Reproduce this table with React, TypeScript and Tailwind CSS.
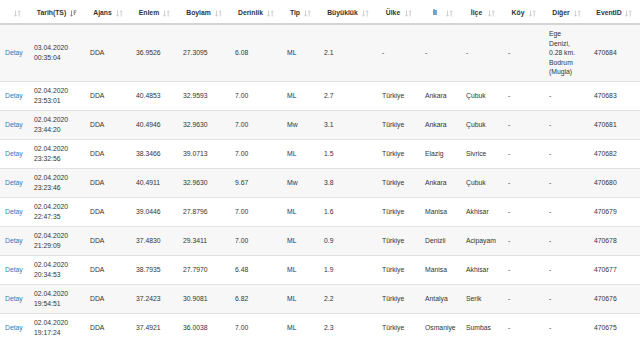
import React from "react";

type Row = {
  date: string;
  time: string;
  lat: string;
  lon: string;
  depth: string;
  type: string;
  mag: string;
  country: string;
  city: string;
  district: string;
  village: string;
  other: string;
  id: string;
};

const rows: Row[] = [
  { date: "03.04.2020", time: "00:35:04", lat: "36.9526", lon: "27.3095", depth: "6.08", type: "ML", mag: "2.1", country: "-", city: "-", district: "-", village: "-", other: "Ege Denizi, 0.28 km. Bodrum (Mugla)", id: "470684" },
  { date: "02.04.2020", time: "23:53:01", lat: "40.4853", lon: "32.9593", depth: "7.00", type: "ML", mag: "2.7", country: "Türkiye", city: "Ankara", district: "Çubuk", village: "-", other: "-", id: "470683" },
  { date: "02.04.2020", time: "23:44:20", lat: "40.4946", lon: "32.9630", depth: "7.00", type: "Mw", mag: "3.1", country: "Türkiye", city: "Ankara", district: "Çubuk", village: "-", other: "-", id: "470681" },
  { date: "02.04.2020", time: "23:32:56", lat: "38.3466", lon: "39.0713", depth: "7.00", type: "ML", mag: "1.5", country: "Türkiye", city: "Elazig", district: "Sivrice", village: "-", other: "-", id: "470682" },
  { date: "02.04.2020", time: "23:23:46", lat: "40.4911", lon: "32.9630", depth: "9.67", type: "Mw", mag: "3.8", country: "Türkiye", city: "Ankara", district: "Çubuk", village: "-", other: "-", id: "470680" },
  { date: "02.04.2020", time: "22:47:35", lat: "39.0446", lon: "27.8796", depth: "7.00", type: "ML", mag: "1.6", country: "Türkiye", city: "Manisa", district: "Akhisar", village: "-", other: "-", id: "470679" },
  { date: "02.04.2020", time: "21:29:09", lat: "37.4830", lon: "29.3411", depth: "7.00", type: "ML", mag: "0.9", country: "Türkiye", city: "Denizli", district: "Acipayam", village: "-", other: "-", id: "470678" },
  { date: "02.04.2020", time: "20:34:53", lat: "38.7935", lon: "27.7970", depth: "6.48", type: "ML", mag: "1.9", country: "Türkiye", city: "Manisa", district: "Akhisar", village: "-", other: "-", id: "470677" },
  { date: "02.04.2020", time: "19:54:51", lat: "37.2423", lon: "30.9081", depth: "6.82", type: "ML", mag: "2.2", country: "Türkiye", city: "Antalya", district: "Serik", village: "-", other: "-", id: "470676" },
  { date: "02.04.2020", time: "19:17:24", lat: "37.4921", lon: "36.0038", depth: "7.00", type: "ML", mag: "2.3", country: "Türkiye", city: "Osmaniye", district: "Sumbas", village: "-", other: "-", id: "470675" },
];

const columns = [
  { label: "", width: "w-[29px]" },
  { label: "Tarih(TS)", width: "w-[56px]", sorted: true },
  { label: "Ajans", width: "w-[46px]" },
  { label: "Enlem", width: "w-[47px]" },
  { label: "Boylam", width: "w-[52px]" },
  { label: "Derinlik", width: "w-[52px]" },
  { label: "Tip", width: "w-[37px]" },
  { label: "Büyüklük", width: "w-[58px]" },
  { label: "Ülke", width: "w-[43px]" },
  { label: "İl", width: "w-[41px]" },
  { label: "İlçe", width: "w-[42px]" },
  { label: "Köy", width: "w-[41px]" },
  { label: "Diğer", width: "w-[45px]" },
  { label: "EventID", width: "w-[51px]" },
];

// glyphicon-sort / glyphicon-sort-by-attributes-alt benzeri ikonlar
const SortIcon = ({ sorted }: { sorted?: boolean }) => (
  <svg
    width="7"
    height="7"
    viewBox="0 0 7 7"
    className={`absolute right-[8px] top-[10px] ${sorted ? "opacity-60" : "opacity-25"}`}
  >
    <g stroke="#333" strokeWidth="0.9" fill="none">
      <path d="M1.5 0.5 V6.2 M0.4 4.9 L1.5 6.2 L2.6 4.9" />
      {sorted ? (
        <path d="M3.8 0.8 H6.6 M3.8 2.6 H5.8 M3.8 4.4 H5 M4.3 0.8 V4.4" />
      ) : (
        <path d="M5.2 6.5 V0.8 M4.1 2.1 L5.2 0.8 L6.3 2.1" />
      )}
    </g>
  </svg>
);

export default function App() {
  return (
    <div className="w-[640px] h-[337px] overflow-hidden bg-white text-[#333] font-['Liberation_Sans',Arial,sans-serif] text-[6.8px] leading-[9.5px]">
      <table className="w-[640px] table-fixed border-collapse">
        <colgroup>
          {columns.map((c, i) => (
            <col key={i} className={c.width} />
          ))}
        </colgroup>
        <thead>
          <tr className="border-b-2 border-[#d4d4d4]">
            {columns.map((c, i) => (
              <th
                key={i}
                className="relative h-[24px] pl-[4px] pr-[15px] pt-[2px] text-center font-bold text-[#333] align-middle whitespace-nowrap"
              >
                {c.label}
                <SortIcon sorted={c.sorted} />
              </th>
            ))}
          </tr>
        </thead>
        <tbody>
          {rows.map((r, i) => (
            <tr
              key={r.id}
              className={`border-b border-[#e2e2e2] ${i % 2 === 0 ? "bg-[#f7f7f7]" : "bg-white"}`}
            >
              <td className={`${i === 0 ? "h-[57px]" : "h-[29px]"} pl-[5px] align-middle text-[#337ab7]`}>
                Detay
              </td>
              <td className="pl-[5px] align-middle">
                {r.date}
                <br />
                {r.time}
              </td>
              <td className="pl-[5px] align-middle">DDA</td>
              <td className="pl-[5px] align-middle">{r.lat}</td>
              <td className="pl-[5px] align-middle">{r.lon}</td>
              <td className="pl-[5px] align-middle">{r.depth}</td>
              <td className="pl-[5px] align-middle">{r.type}</td>
              <td className="pl-[5px] align-middle">{r.mag}</td>
              <td className="pl-[5px] align-middle">{r.country}</td>
              <td className="pl-[5px] align-middle">{r.city}</td>
              <td className="pl-[5px] align-middle">{r.district}</td>
              <td className="pl-[5px] align-middle">{r.village}</td>
              <td className="pl-[5px] align-middle">
                <div className="w-[30px]">{r.other}</div>
              </td>
              <td className="pl-[5px] align-middle">{r.id}</td>
            </tr>
          ))}
        </tbody>
      </table>
    </div>
  );
}
